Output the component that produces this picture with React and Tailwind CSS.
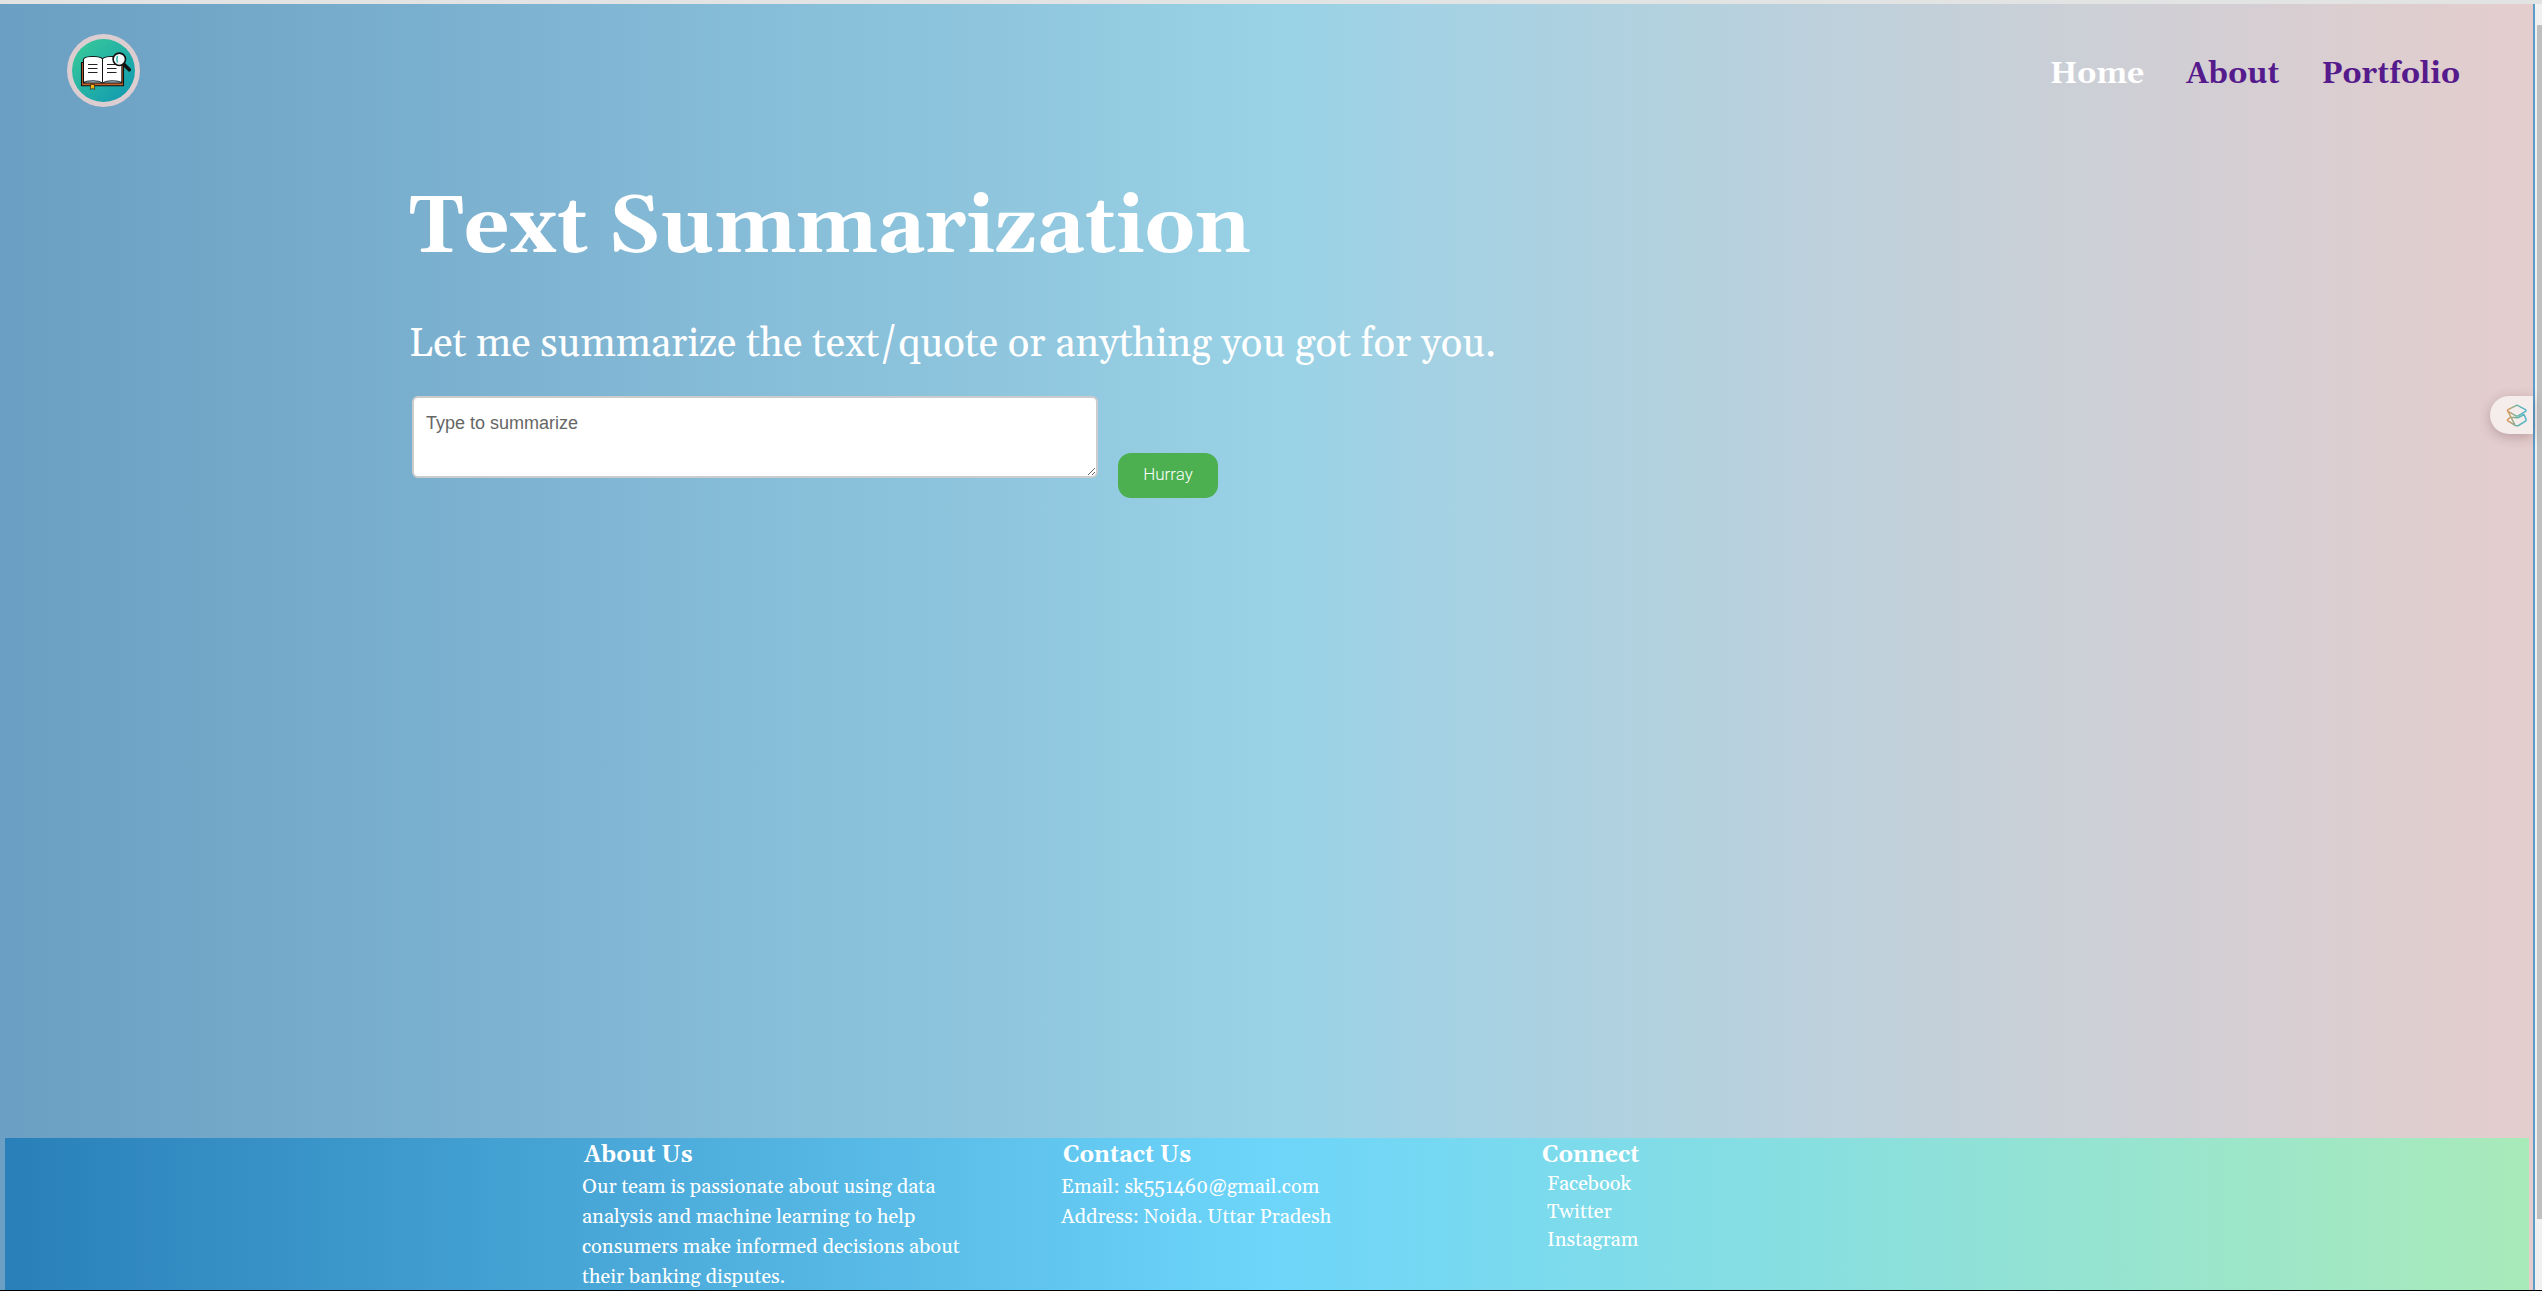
import React from 'react';

const navLinks = [
  { label: 'Home', color: 'text-white' },
  { label: 'About', color: 'text-[#551a8b]' },
  { label: 'Portfolio', color: 'text-[#551a8b]' },
];

const socialLinks = ['Facebook', 'Twitter', 'Instagram'];

function Logo() {
  return (
    <svg viewBox="0 0 73 73" className="h-[73px] w-[73px]" role="img" aria-label="Text Summarization logo">
      <defs>
        <linearGradient id="logoFill" x1="0" y1="0" x2="1" y2="1">
          <stop offset="0.1" stopColor="#35c79a" />
          <stop offset="0.9" stopColor="#139cb0" />
        </linearGradient>
      </defs>
      <circle cx="36.5" cy="36.5" r="36.5" fill="#dccdd1" />
      <circle cx="36.5" cy="36.5" r="31.5" fill="url(#logoFill)" />
      <path d="M14.5 28.5h42v23.2h-42z" fill="#c8622a" stroke="#111" strokeWidth="1.1" />
      <path d="M23.5 50.500h4v5l-2-1.200-2 1.200z" fill="#fdb813" stroke="#111" strokeWidth="0.6" />
      <path d="M16.500 25q2-2.500 9.500-2.500t9.500 2.600q2-2.600 9.500-2.600t9.800 2.500v24h-38.300z" fill="#bcd9e8" stroke="#111" strokeWidth="1.2" />
      <path d="M17 25.200q2-2.200 9-2.200t9.500 2.600q2-2.600 9.500-2.600t9.200 2.200v21.800q-3-1-9.200-0.800t-9.500 2.300q-3-2.200-9.500-2.300t-9 0.800z" fill="#fff" />
      <path d="M16.500 48.600q3-1.800 9.500-1.800t9.500 2.200q3-2.200 9.500-2.200t9.800 1.800" stroke="#111" strokeWidth="0.9" fill="none" />
      <path d="M35.500 25v23.500" stroke="#111" strokeWidth="1" />
      <path d="M21 30.500h9.500M21 34.500h9.500M21 38.500h9.500M40 30.500h9.500M40 34.500h9.500M40 38.500h9.500" stroke="#222" strokeWidth="1" />
      <path d="M57 30.500l5.300 5.300" stroke="#111" strokeWidth="3.600" strokeLinecap="round" />
      <circle cx="52.300" cy="25.300" r="6.200" fill="#f4f8f8" stroke="#111" strokeWidth="1.600" />
      <path d="M50.500 22q-1.500 3.500 0 6.500" stroke="#2bb5ac" strokeWidth="1.500" fill="none" />
    </svg>
  );
}

function SideTab() {
  return (
    <button
      type="button"
      aria-label="Open side panel"
      className="absolute right-0 top-[392px] flex h-[38px] w-[43px] items-center rounded-l-full bg-[#f5ecec] pl-4 shadow-[0_3px_12px_rgba(90,50,60,0.3)]"
    >
      <svg viewBox="0 0 22 23" className="h-[23px] w-[22px]" fill="none" strokeWidth="1.500" strokeLinejoin="round" strokeLinecap="round">
        <defs>
          <linearGradient id="tabStroke" x1="0" y1="0" x2="22" y2="0" gradientUnits="userSpaceOnUse">
            <stop offset="0" stopColor="#f0924e" />
            <stop offset="0.5" stopColor="#69b6a6" />
            <stop offset="1" stopColor="#4bb4d4" />
          </linearGradient>
        </defs>
        <g stroke="url(#tabStroke)">
          <path d="M11 1.200l8.500 4.500q1 0.800 0 1.600l-7 4.400q-1.500 0.700-3 0l-7.500-4.400q-1-0.800 0-1.600z" />
          <path d="M2 7.500l6.500 12.500M4.500 13.200l-2.800 2.300q-0.700 0.800 0.200 1.400l7.600 4.600q1.500 0.600 3 0l7-4.400q1-0.900 0.500-2l-2-4.600-5.500 3q-1.500 0.700-3 0z" />
        </g>
      </svg>
    </button>
  );
}

export default function App() {
  return (
    <div className="flex h-screen flex-col overflow-hidden border-b border-black font-[Gelasio,Georgia,serif] text-white">
      <div className="h-1 shrink-0 bg-[#e2e3e3]" />
      <div className="flex min-h-0 flex-1">
        <div className="relative flex min-w-0 flex-1 flex-col bg-linear-to-r from-[#6b9fc3] via-[#9ad2e6] via-51% to-[#e5cdcd]">
          <header className="flex items-center justify-between pl-[67px] pr-[73px] pt-[30px]">
            <a href="#home"><Logo /></a>
            <nav className="flex gap-[42px] pt-1.5 text-[30px] font-bold leading-9">
              {navLinks.map((l) => (
                <a key={l.label} href={'#' + l.label.toLowerCase()} className={l.color}>{l.label}</a>
              ))}
            </nav>
          </header>

          <main className="mt-[74px] flex-1 pl-[409px]">
            <h1 className="text-[80px] font-bold leading-24">Text Summarization</h1>
            <label htmlFor="source" className="mt-11 block text-[40px] leading-12">
              Let me summarize the text/quote or anything you got for you.
            </label>
            <form className="ml-[3px] mt-[27px] flex items-start gap-5" onSubmit={(e) => e.preventDefault()}>
              <textarea
                id="source"
                placeholder="Type to summarize"
                className="h-[82px] w-[686px] resize rounded-md border-2 border-[#ccc] bg-white px-3 py-[13px] font-['Liberation_Sans',sans-serif] text-lg leading-6 text-black placeholder:text-[#666]"
              />
              <button
                type="submit"
                className="mt-[57px] h-[45px] w-[100px] rounded-[13px] bg-[#4caf50] pb-0.5 font-[Roboto,sans-serif] text-[17px] font-light"
              >
                Hurray
              </button>
            </form>
          </main>

          <footer className="ml-[5px] mr-1 grid h-[152px] shrink-0 grid-cols-[479px_479px_1fr] bg-linear-to-r from-[#2980b9] via-[#6dd5fa] to-[#a9eab9] pl-[577px] pt-1 text-xl">
            <section>
              <h2 className="pl-0.5 text-[23px] font-bold leading-7">About Us</h2>
              <p className="mt-0.5 w-[400px] leading-[30px]">
                Our team is passionate about using data analysis and machine learning to help consumers make informed decisions about their banking disputes.
              </p>
            </section>
            <section>
              <h2 className="pl-0.5 text-[23px] font-bold leading-7">Contact Us</h2>
              <p className="mt-0.5 leading-[30px]">Email: sk551460@gmail.com</p>
              <p className="leading-[30px]">Address: Noida. Uttar Pradesh</p>
            </section>
            <section>
              <h2 className="pl-0.5 text-[23px] font-bold leading-7">Connect</h2>
              <ul className="pl-[7px] leading-7">
                {socialLinks.map((s) => (
                  <li key={s}><a href={'#' + s.toLowerCase()}>{s}</a></li>
                ))}
              </ul>
            </section>
          </footer>

          <SideTab />
        </div>
        <div className="w-0.5 shrink-0 bg-[#5a9bc8]" />
        <div className="w-[7px] shrink-0 bg-[#f1f1f1] pb-[71px] pl-0.5 pt-[21px]">
          <div className="h-full bg-[#bfbfbf]" />
        </div>
      </div>
    </div>
  );
}
